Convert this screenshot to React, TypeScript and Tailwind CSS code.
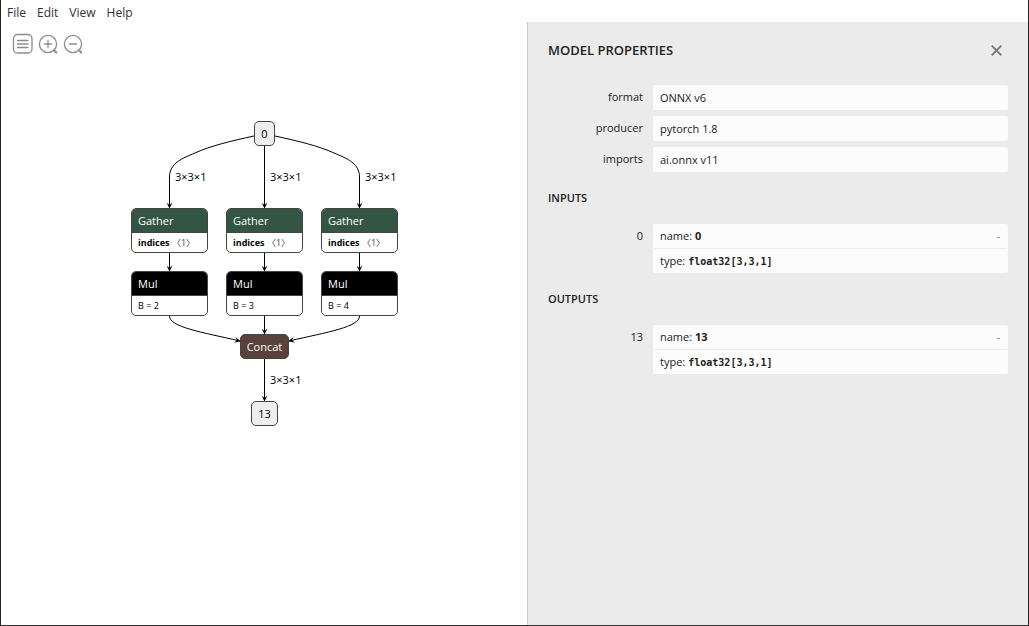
import type { ReactNode } from "react";

const menus = ["File", "Edit", "View", "Help"];

const properties = [
  { label: "format", value: "ONNX v6" },
  { label: "producer", value: "pytorch 1.8" },
  { label: "imports", value: "ai.onnx v11" },
];

const columns = [
  { place: "left-0", b: "2" },
  { place: "left-[95px]", b: "3" },
  { place: "left-[190px]", b: "4" },
];

const edges = [
  "M123 15 C100 20 79 25 64 32 C52 37 38.5 42 38.5 56 V87",
  "M133.5 25 V87",
  "M144 15 C167 20 188 25 203 32 C215 37 228.5 42 228.5 56 V87",
  "M38.5 132 V150",
  "M133.5 132 V150",
  "M228.5 132 V150",
  "M38.5 195 C38.5 206 70 211 109 220",
  "M133.5 195 V213",
  "M228.5 195 C228.5 206 197 211 158 220",
  "M133.5 238 V280",
];

function ToolButton({ label, children }: { label: string; children: ReactNode }) {
  return (
    <button type="button" aria-label={label} className="size-[25px]">
      <svg
        viewBox="0 0 25 25"
        className="size-full fill-none stroke-[#8c8c8c]"
        strokeWidth="1.3"
        strokeLinecap="round"
      >
        {children}
      </svg>
    </button>
  );
}

function OperatorNode({
  name,
  place,
  header,
  children,
}: {
  name: string;
  place: string;
  header: string;
  children: ReactNode;
}) {
  return (
    <div
      className={`absolute h-[45px] w-[77px] overflow-hidden rounded-[5px] border border-[#444] bg-white ${place}`}
    >
      <div className={`h-6 border-b border-[#444] px-[6px] text-[11px] leading-6 text-white ${header}`}>
        {name}
      </div>
      <div className="px-[6px] text-[9px] leading-5 whitespace-nowrap">{children}</div>
    </div>
  );
}

function ValueNode({ children, place }: { children: ReactNode; place: string }) {
  return (
    <div
      className={`absolute h-[25px] rounded-[5px] border border-[#444] text-center text-[11px] leading-[23px] ${place}`}
    >
      {children}
    </div>
  );
}

function EdgeLabel({ place }: { place: string }) {
  return <div className={`absolute text-[11px] leading-4 whitespace-nowrap ${place}`}>3×3×1</div>;
}

function Graph() {
  return (
    <div className="relative mx-auto mt-[65px] h-[305px] w-[266px] text-black">
      <svg
        width="267"
        height="305"
        viewBox="0 0 267 305"
        className="absolute top-0 left-0 max-w-none fill-none stroke-black"
      >
        <defs>
          <marker
            id="arrow"
            viewBox="0 0 10 10"
            refX="9"
            refY="5"
            markerWidth="7"
            markerHeight="6"
            markerUnits="userSpaceOnUse"
            orient="auto"
          >
            <path d="M0 0 L10 5 L0 10 L4 5 Z" fill="black" stroke="none" />
          </marker>
        </defs>
        {edges.map((d) => (
          <path key={d} d={d} markerEnd="url(#arrow)" />
        ))}
      </svg>
      <ValueNode place="top-0 left-[123px] w-[21px] bg-[#eee]">0</ValueNode>
      <EdgeLabel place="top-12 left-[44px]" />
      <EdgeLabel place="top-12 left-[139px]" />
      <EdgeLabel place="top-12 left-[234px]" />
      {columns.map((column) => (
        <div key={column.b}>
          <OperatorNode name="Gather" place={`top-[87px] ${column.place}`} header="bg-[#335544]">
            <b>indices</b> <span className="text-[#444]">〈1〉</span>
          </OperatorNode>
          <OperatorNode name="Mul" place={`top-[150px] ${column.place}`} header="bg-black">
            B = {column.b}
          </OperatorNode>
        </div>
      ))}
      <ValueNode place="top-[213px] left-[109px] w-[49px] bg-[#59423b] text-white">Concat</ValueNode>
      <EdgeLabel place="top-[251px] left-[139px]" />
      <ValueNode place="top-[280px] left-[120px] w-[27px] bg-[#eee]">13</ValueNode>
    </div>
  );
}

function ArgumentSection({ title, name }: { title: string; name: string }) {
  return (
    <section>
      <h2 className="pt-4 text-[11px] leading-5 font-semibold">{title}</h2>
      <div className="mt-4 flex gap-[10px]">
        <div className="w-[95px] shrink-0 text-right text-[11px] leading-6">{name}</div>
        <div className="min-w-0 flex-1 rounded-[2px] bg-[#fcfcfc] text-[11px] leading-6">
          <div className="flex h-6 justify-between pr-2 pl-[7px]">
            <span>
              name: <b>{name}</b>
            </span>
            <button type="button" aria-label={`Collapse ${title.toLowerCase()} ${name}`} className="text-[#777]">
              -
            </button>
          </div>
          <div className="mx-px flex h-[25px] items-baseline gap-[3px] border-t border-[#eee] pl-[6px]">
            <span>type:</span>
            <code className="font-['DejaVu_Sans_Mono',monospace] text-[10px] font-bold">float32[3,3,1]</code>
          </div>
        </div>
      </div>
    </section>
  );
}

export default function App() {
  return (
    <div className="flex min-h-screen flex-col border-x border-b border-x-[#222] border-b-[#333] bg-white font-['Open_Sans','Noto_Sans_CJK_SC',sans-serif] text-[#222]">
      <nav className="flex h-[22px] items-end gap-[11px] pl-[6px] text-[12px] leading-[18px] text-[#333]">
        {menus.map((menu) => (
          <button key={menu} type="button">
            {menu}
          </button>
        ))}
      </nav>
      <div className="grid flex-1 grid-cols-[526fr_501fr]">
        <main className="pt-[9px] pb-10">
          <div className="flex pl-[9px]">
            <ToolButton label="Model properties">
              <rect x="3.5" y="3.5" width="18.5" height="18.5" rx="4" />
              <path d="M7.5 9.5 H18 M7.5 13 H18 M7.5 16.5 H18" />
            </ToolButton>
            <ToolButton label="Zoom in">
              <circle cx="13" cy="13" r="8.6" />
              <path d="M9.5 13 H16.5 M13 9.5 V16.5" />
              <path d="M19 19.3 L21.3 21.5" strokeWidth="2" />
            </ToolButton>
            <ToolButton label="Zoom out">
              <circle cx="13" cy="13" r="8.6" />
              <path d="M9.5 13 H16.5" />
              <path d="M19 19.3 L21.3 21.5" strokeWidth="2" />
            </ToolButton>
          </div>
          <Graph />
        </main>
        <aside className="border-l border-[#ccc] bg-[#ebebeb] px-5 pt-[18px]">
          <header className="flex items-center justify-between">
            <h1 className="text-[13px] leading-5 font-semibold">MODEL PROPERTIES</h1>
            <button type="button" aria-label="Close" className="pr-[6px]">
              <svg viewBox="0 0 11 11" className="size-[11px] stroke-[#777]" strokeWidth="1.9">
                <path d="M0.7 0.7 L10.3 10.3 M10.3 0.7 L0.7 10.3" />
              </svg>
            </button>
          </header>
          <div className="mt-[25px] flex flex-col gap-[6px]">
            {properties.map((property) => (
              <div key={property.label} className="flex gap-[10px] text-[11px]">
                <div className="w-[95px] shrink-0 text-right leading-6">{property.label}</div>
                <div className="min-w-0 flex-1 rounded-[2px] bg-[#fcfcfc] pl-[7px] leading-[25px]">
                  {property.value}
                </div>
              </div>
            ))}
          </div>
          <ArgumentSection title="INPUTS" name="0" />
          <ArgumentSection title="OUTPUTS" name="13" />
        </aside>
      </div>
    </div>
  );
}
